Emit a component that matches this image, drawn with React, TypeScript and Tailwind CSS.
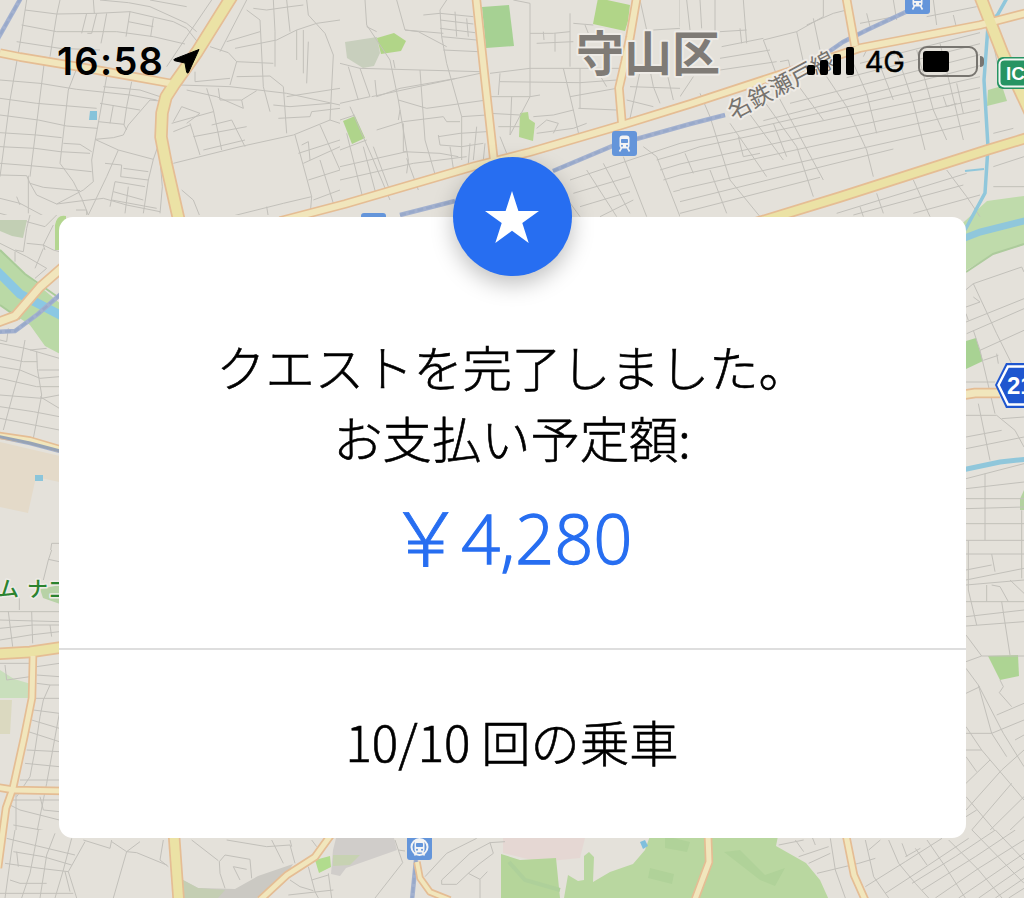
type Tile = { x: number; y: number; w: number; h: number; d: string };
type Road = { d: string; width: number };

// Minor streets, grouped by map tile. Each tile is drawn at 3x its final size.
const streets: Tile[] = [
  {
    x: 0,
    y: 0,
    w: 340,
    h: 215,
    d: `M80 0L60 130L30 300L0 530 M75 30L170 42L290 40L390 35L520 65L560 85L592 125 M65 75L170 95L350 95L460 110L555 132 M50 125L180 145L300 150
      M180 0L170 45L150 170 M290 40L275 100L262 100 M260 40L245 100 M320 40L310 95L303 130 M390 35L378 110 M300 0L385 8L450 20L560 70L590 95 M460 55L452 110 M385 65L460 80
      M280 0L283 40 M450 0L560 20 M240 180L205 270L180 490 M135 170L90 530 M320 230L275 480L280 545L250 570L170 612
      M0 240L120 250L230 268L390 285L470 300 M0 295L110 310L290 325 M0 345L115 360L200 378L292 385 M0 398L110 405L185 413 M0 440L105 445L180 455L270 460 M0 490L90 497L180 505L275 515
      M0 525L80 527L90 550L110 585L170 612L240 603L310 595L380 615L480 635 M180 490L220 545L245 595L265 645 M85 527V640 M90 550L130 562L240 572 M0 595L60 610L135 650 M50 590L60 615 M0 640L70 660
      M450 300L480 303 M450 300L385 375L370 405L340 413L285 418L355 450L460 478L480 420 M395 245L380 320L372 375L380 390 M300 310L420 330 M340 315L330 370 M295 365L372 373
      M190 430L240 433L275 455 M310 260L420 270L480 290 M355 450L320 530L265 645 M315 490L365 495L362 530L445 540L460 478 M370 505L445 515 M345 545L435 560 M345 545L330 620 M340 575L430 600 M335 600L470 625 M385 560L375 640 M445 540L430 640 M480 480L487 560L480 640
      M228 630H260V650 M635 0L560 110L500 200 M740 0L660 155 M630 140L685 158L710 185L690 255 M740 30L780 60L790 260L810 335 M820 0L825 95L825 200 M760 25L800 30L870 20L910 15 M860 0L870 95 M910 90L910 220 M920 0L925 45L975 100L1000 165L990 360
      M680 125L780 95 M705 145L830 120L890 90L950 70L1020 60 M890 90L890 180 M925 125L920 250 M710 185L820 190 M710 230L810 228L850 260L860 400 M585 215L585 245L690 235 M540 255L690 260L860 280L1020 315 M860 290L1020 265 M560 270L650 290L730 325 M655 265L660 300H725L770 272 M725 300L730 325
      M620 265L640 330L665 450 M520 365L545 320L600 340L560 370 M515 370L640 335 M570 370L600 465 M520 395L570 375 M635 375L695 360L735 440 M580 410L740 380 M610 450L735 420 M520 490L720 440L880 405L990 360L1020 370
      M820 315L870 320L990 310 M835 355L930 350L935 335L1020 325 M885 405L935 590L930 650 M905 435L925 425L930 480 M960 375L1020 510 M895 460L1020 420 M910 490L1020 440 M925 540L1020 510 M940 600L1020 570 M960 480L1000 610 M600 650L580 600L545 570 M690 650L850 610L935 590 M800 620L805 650`,
  },
  {
    x: 340,
    y: 0,
    w: 340,
    h: 217,
    d: `M75 0L80 75L150 180L175 300L205 480L200 520 M170 0L195 90L310 100 M195 90L235 95L320 140 M320 0L300 30L305 110L320 190L365 350L365 480 M80 80L110 95 M250 45L300 40L400 50 M300 60L400 72 M300 85L405 98 M305 110L410 120 M345 35L350 110 M380 55L385 110 M310 150L415 155
      M0 190L60 205L240 210L420 215 M160 180L165 205 M60 205L90 290L0 310 M25 200L55 300 M95 290L420 220 M105 240L110 290L180 265L350 235 M240 210L255 420L290 540 M175 300L260 325L440 300 M190 365L310 350L320 365L360 365 M110 390L190 365 M30 320L100 480L150 600 M0 360L45 345
      M190 370V455L300 460L355 470 M295 405L300 435L365 440L430 430 M295 410L360 400L440 395 M365 350L440 345 M180 330L175 360 M0 450L80 420 M0 500L110 475L200 455 M0 540L220 490L380 470 M100 440L145 560 M200 475L235 570 M70 440L110 590 M390 430L385 490 M410 380L400 480 M435 430L430 480 M20 400L70 600 M330 440L340 505
      M520 0L570 10L570 290L510 405 M570 100L640 100L690 95 M610 95L612 120 M645 100L645 155 M590 130L700 125 M690 40V200 M570 205H840 M450 220L570 205 M480 220L475 285 M480 245L720 248L830 240 M440 290L570 290L600 285 M515 290L510 405 M450 340L540 345 M720 205V325 M670 205L700 330L720 420
      M690 290L830 265 M715 325L830 330 M580 350L640 345L700 330 M590 385L620 360L655 370L640 400 M590 400L700 385L740 370 M480 410L500 460 M475 380H540 M700 70L760 75 M735 75L745 100 M770 210L800 260 M870 260L1020 265 M860 300L940 320 M930 210L940 260L960 310 M900 215L870 355 M980 215L1000 300
      M900 0L920 90 M1020 0V80 M940 90L1020 85 M690 540L900 470L1020 430 M640 540L720 650 M740 510L830 650 M790 490L870 640 M850 470L920 650 M910 440L950 470L1020 650 M700 580L870 530 M720 620L870 575 M780 650L880 600 M950 480L1020 460 M960 510L1020 492 M970 540L1020 525 M1000 575L1020 570`,
  },
  {
    x: 680,
    y: 0,
    w: 344,
    h: 217,
    d: `M20 0L30 90 M60 0L65 85 M105 0L105 95 M190 0L200 130 M120 95L200 90 M125 140L250 115 M180 85L185 130 M120 175L270 150 M120 210L290 185 M250 120L290 225 M0 290L40 230 M300 185L325 180L330 200 M250 120L350 95L430 50L430 0 M350 95L370 185 M400 55L420 150 M380 75L460 40L500 30
      M560 40L570 80 M640 0L650 60 M760 0L770 75 M740 50L890 20 M540 70L670 45 M820 45L830 85 M550 170L560 150
      M540 190L900 98 M500 233L900 131 M330 310L900 164 M250 362L900 197 M0 430L160 398L900 230 M0 460L60 440L900 263 M0 492L900 297 M0 525L900 330 M0 568L900 365 M0 605L640 447 M0 640L420 532
      M60 280L90 350L150 540L240 650 M150 370L260 530 M200 330L310 480 M250 300L350 440L400 590 M290 280L430 540 M350 250L430 360 M440 230L500 320L560 450L580 530 M520 190L560 280L590 400 M590 170L640 300 M650 160L700 310L735 450 M710 150L760 330L800 420 M780 130L850 420 M830 250L850 340 M175 410L190 470L240 460 M15 460L40 520 M90 510L140 640 M280 370L320 470 M790 290L800 320L830 310
      M590 580L610 640 M700 540L750 650 M800 510L860 590L900 650 M540 620L550 650 M520 645L850 555 M700 640L900 585 M470 640L860 520 M940 500L1032 470 M940 560H1032 M940 400L1000 385 M1000 240L1032 235 M940 130L960 230`,
  },
  {
    x: 0,
    y: 215,
    w: 62,
    h: 335,
    d: `M90 0L80 40L70 110L45 105 M80 20L135 35L170 0 M80 85L130 90L160 105L178 110 M160 30L130 90L135 105 M130 100L105 160 M45 110V140 M0 85L80 125L140 160L105 190 M75 375L60 460L10 645 M25 340L20 380L0 375 M0 385L75 400L178 430 M90 405L140 400 M0 425L70 440H112 M0 455L60 465L120 490L178 485 M110 410L112 460L125 540L100 670 M0 490L110 515H178 M0 540L125 550L178 540 M0 575L100 590L178 605 M0 610L178 645 M115 465H178 M120 545L178 580 M150 1020L155 985H178`,
  },
  {
    x: 0,
    y: 550,
    w: 62,
    h: 280,
    d: `M155 0L145 30L130 90 M145 28L178 35 M58 145V180 M0 185H178 M0 210L178 215 M0 235L100 225H178 M95 185L98 280 M25 185L38 290 M0 270L90 255L178 245 M150 225L155 260 M0 340H90 M15 345L20 390L90 380 M110 350L178 340 M110 375L178 380 M110 400L150 405L130 450L120 500L105 600L90 680L50 740 M150 405L178 405 M178 490L140 700L110 850 M105 445H178 M100 480L178 490 M95 510L178 535 M85 545L178 575 M80 600L178 605 M75 640L178 650 M60 690H178 M35 750H178 M120 740L130 780L178 785 M30 765L60 780L178 810 M48 730V840 M40 825L178 850`,
  },
  {
    x: 960,
    y: 217,
    w: 64,
    h: 333,
    d: `M18 218L40 200L185 150L192 165 M40 200L110 350L155 440 M18 270L60 255 M40 240L60 255 M18 315L192 245 M20 350L192 275 M18 290L25 310 M60 400L192 340 M70 430L115 415 M40 340L60 400L105 590 M110 410L115 440 M18 495H105 M18 595H110L165 640L192 690 M55 560L90 730 M18 660L125 640 M18 695L192 660 M125 605L192 600 M75 770V970 M18 785L192 740 M18 815L192 795 M18 845H192 M18 875L192 870 M18 920H192 M18 970H192 M25 970V1020 M185 880V1020`,
  },
  {
    x: 960,
    y: 550,
    w: 64,
    h: 280,
    d: `M18 12H192 M25 0V120L50 225 M185 0V85 M95 12L105 65 M18 60L95 45 M18 90L192 55 M18 105L192 90 M80 105V155 M95 105L120 110L145 155 M18 155H192 M150 90L192 130 M18 200L192 180 M18 228L192 215 M125 155L150 315 M18 255L65 318H192 M65 318L18 335 M18 355L55 405L95 550L140 620 M55 405L130 550L192 650 M18 430L60 410 M120 390L130 410L118 428L155 470 M110 495L192 460 M18 550H95L192 510 M165 570L192 555 M18 600H65L150 700L192 750 M18 530L65 600 M18 620L50 665 M18 700L90 630 M192 600L125 660L18 780 M18 740L120 860 M18 800L50 780 M155 700L18 860 M192 740L60 870 M192 800L140 850`,
  },
  {
    x: 0,
    y: 830,
    w: 512,
    h: 68,
    d: `M45 0L35 60L15 204 M115 0L90 130L65 204 M165 10L140 75L120 204 M215 25L190 120L165 204 M255 35L205 125L230 204 M20 25L100 45L225 75 M40 65L130 80L215 105 M15 100L120 115L205 125 M30 150L60 160H140 M0 190H220 M50 65L55 110 M195 125L210 185 M250 30L330 55L335 30 M335 35L380 65L420 35 M380 65L410 68L500 105 M380 65L340 204 M490 30L480 90L505 110 M575 30L655 92 M675 75L750 88L755 145 M675 75L658 95L660 130L675 175 M720 150L700 110L740 118 M680 30L800 50L870 45L885 100 M815 30L850 100 M870 30L875 50 M935 30L950 50 M925 110L945 185L955 204 M870 150L900 170L940 182 M935 150L985 135 M865 195L1000 180 M985 130L995 204 M1185 30L1195 60L1208 98L1125 204 M1195 60L1215 63 M1275 140L1340 70L1430 25 M1325 150V163H1370L1405 130L1440 148V204 M1325 150L1410 70L1470 38L1515 35 M1470 38L1480 70L1440 100L1405 130 M1440 148L1462 125`,
  },
  {
    x: 512,
    y: 830,
    w: 512,
    h: 68,
    d: `M800 45L875 30 M850 30L875 65 M860 80L950 50 M890 100L955 70 M915 130L1040 100L1090 85 M955 25L970 120L1000 204 M1060 30L1085 140L1130 204 M900 20L910 45 M1070 60L1105 30 M1130 30L1160 100L1210 160L1250 204 M1060 170L1180 95L1290 25 M1120 190L1250 105L1370 25 M1170 40L1185 80 M1210 55L1245 105 M1180 80L1225 55 M1245 30L1300 110L1360 204 M1310 30L1400 120L1470 204 M1380 0L1536 160 M1450 0L1536 90 M1200 160L1330 80L1450 0 M1230 180L1390 80L1510 0 M1270 204L1400 115L1536 30 M1340 204L1536 70 M1400 204L1536 110 M1450 204L1536 145 M1490 204L1536 175`,
  },
];

const roads: Road[] = [
  { d: "M0 53L20 57L80 67L130 76L174 84", width: 6 },
  { d: "M476 -4L485 80L495 170", width: 6 },
  { d: "M637 -4L630 37L625 62L619 88L622 124", width: 6 },
  { d: "M846 -4L855 46", width: 6 },
  { d: "M280 221L345 204L475 166L530 152L622 125L690 104L797 69L860 48L980 25L1030 12", width: 6 },
  { d: "M232 -4L197 52L175 83L166 97L162 113L161 137L166 163L180 225", width: 10 },
  { d: "M980 -4L1002 52L1030 112", width: 10 },
  { d: "M755 223L840 197L987 150L1030 137", width: 8 },
  { d: "M-4 323L15 316L40 287L64 266", width: 7 },
  { d: "M-4 435L30 440L64 450", width: 4 },
  { d: "M-4 654L30 652L64 647", width: 9 },
  { d: "M33 656L32 698L24 738L13 788L6 808L-2 868", width: 5 },
  { d: "M-4 787L14 790L64 791", width: 5 },
  { d: "M962 395L975 393L1000 393", width: 7 },
  { d: "M174 835L179 905", width: 9 },
  { d: "M333 832L315 857L287 875L260 900", width: 5 },
  { d: "M417 862L420 878L430 892L450 900", width: 4 },
  { d: "M708 835L709 862L694 902", width: 5 },
  { d: "M846 835L854 875L866 902", width: 5 },
];

const rails = [
  "M400 215L455 201",
  "M553 171L615 145L690 124L725 115",
  "M827 53L843 42L867 30L910 10",
  "M-4 42L22 -4",
  "M-4 332L15 331L38 314L62 293",
  "M-4 436L30 443L64 452",
  "M416 860L412 900",
];

function Station({ x, y }: { x: number; y: number }) {
  return (
    <g transform={`translate(${x} ${y})`}>
      <rect width="25" height="25" rx="3" fill="#6495da" />
      <rect x="7.5" y="4.5" width="10" height="13" rx="3" fill="#f4f4f4" />
      <rect x="9" y="8" width="7" height="4" rx=".8" fill="#6495da" />
      <circle cx="10" cy="14.8" r="1" fill="#6495da" />
      <circle cx="15" cy="14.8" r="1" fill="#6495da" />
      <path d="M9.5 17L7.5 20.5M15.5 17L17.5 20.5" stroke="#f4f4f4" strokeWidth="1.6" />
    </g>
  );
}

function MapBackground() {
  return (
    <svg
      className="absolute inset-0"
      width="1024"
      height="898"
      viewBox="0 0 1024 898"
      fill="none"
      aria-hidden="true"
    >
      <rect width="1024" height="898" fill="#e4e1da" />

      {/* parks, water and building areas */}
      <path d="M482 7L509 5L514 46L486 48Z" fill="#a6d193" />
      <path d="M598 -2L630 5L628 21L625 31L593 24Z" fill="#b1d588" />
      <path d="M345 42L377 37L380 53L374 66L363 68L347 58Z" fill="#c8cfbd" />
      <path d="M377 38L394 33L406 41L401 51L381 54Z" fill="#b1d588" />
      <path d="M343 121L355 116L365 138L352 144Z" fill="#afd48b" />
      <path d="M520 113L528 112L529 119L535 123L533 141L519 137Z" fill="#b4d690" />
      <path d="M988 90L1002 86L1007 101L987 106Z" fill="#b6d5a0" />
      <path d="M955 230L987 201L1024 196V245L993 254L960 274Z" fill="#bfdbab" />
      <path d="M966 272L993 254L1024 244" stroke="#adcb9c" strokeWidth="2" />
      <path d="M90 111H97V120H89Z" fill="#86c3da" />
      <path d="M0 220L27 220L23 238L12 236L0 231Z" fill="#c2cfb4" />
      <path d="M55 225Q57 214 66 216V250H55Z" fill="#b4d690" />
      <path d="M0 250L25 274L62 305V355L45 346L30 325L0 305Z" fill="#bad9a6" />
      <path d="M0 250L25 274L62 300M0 305L20 319" stroke="#a9cb98" strokeWidth="2" />
      <path d="M-4 270L20 294L62 316" stroke="#8bc8e3" strokeWidth="9" />
      <path d="M0 442L64 457V483L36 477L28 513L0 507Z" fill="#e4dac9" />
      <path d="M35 475H43V481H35Z" fill="#8bc5da" />
      <path d="M40 589L60 585V604L43 598Z" fill="#b7d2a6" />
      <path d="M0 670L14 679L31 684V698H0Z" fill="#c9dfbc" />
      <path d="M0 700H12L10 734H0Z" fill="#dbd9c0" />
      <path d="M966 341L976 338L983 361L966 369Z" fill="#a8d293" />
      <path d="M1020 499L1024 490V510H1020Z" fill="#b4d2a0" />
      <path d="M988 656L1018 655L1019 676L1000 680Z" fill="#add493" />
      <path d="M183 880L198 888L235 889L258 876L293 864L280 885L257 898H183Z" fill="#cbc9c3" />
      <path d="M183 880L198 888L225 890L218 898H183Z" fill="#c4ceb3" />
      <path d="M336 838H394L397 850L346 868L340 876L331 874L333 850Z" fill="#d0cdca" />
      <path d="M333 855L360 855L350 865L333 866Z" fill="#c7d2b2" />
      <path d="M315 860L330 856L331 867L319 873Z" fill="#b1dc8d" />
      <path d="M503 838H585L580 858L540 862L503 853Z" fill="#e5d7d3" />
      <path d="M501 898V854L520 860L556 858L560 898Z" fill="#b5d59a" />
      <path
        d="M564 898L568 875L578 881L584 880V856L589 852L594 857L593 882L610 872L633 864L645 850L650 836H778L776 846L806 863L820 880L829 900Z"
        fill="#b9d7a0"
      />
      <path
        d="M665 836L690 842L687 852L665 848ZM724 852L740 850L765 875L785 868L775 886L760 880ZM650 868L674 874L672 884L648 878Z"
        fill="#b0d299"
      />
      <path d="M640 842L645 840L648 846L643 849Z" fill="#7fbfdd" />
      <path d="M509 862L525 880L560 890" stroke="#aed09a" strokeWidth="4" />

      {streets.map((tile) => (
        <svg
          key={`${tile.x}-${tile.y}`}
          x={tile.x}
          y={tile.y}
          width={tile.w}
          height={tile.h}
          viewBox={`0 0 ${tile.w * 3} ${tile.h * 3}`}
        >
          <path d={tile.d} stroke="#c2c0ba" strokeWidth="3" />
        </svg>
      ))}

      <g stroke="#90c7db">
        <path d="M1007 -2L998 14L988 26L984 80L988 147L985 193L965 230" strokeWidth="3.5" />
        <path d="M965 171L984 169" strokeWidth="2" />
        <path d="M962 239L980 232L1028 220" strokeWidth="7" />
        <path d="M962 470L1000 462L1028 459" strokeWidth="5" />
      </g>

      {rails.map((d) => (
        <g key={d}>
          <path d={d} stroke="#a3b1cf" strokeWidth="4.5" />
          <path d={d} stroke="#98a9ca" strokeWidth="2.5" strokeDasharray="6 3" />
        </g>
      ))}

      <g strokeLinejoin="round">
        {roads.map((road) => (
          <path key={road.d} d={road.d} stroke="#e5bd94" strokeWidth={road.width + 3.4} />
        ))}
        {roads.map((road) => (
          <path
            key={road.d}
            d={road.d}
            stroke={road.width > 7 ? "#ebe2a5" : "#f1e6bc"}
            strokeWidth={road.width}
          />
        ))}
      </g>
      <path d={rails[5]} stroke="#97a3b5" strokeWidth="3" />

      <Station x={612} y={131} />
      <Station x={905} y={-11} />
      <Station x={361} y={213} />
      <Station x={407} y={835} />
      <circle cx="419.5" cy="847" r="8" stroke="#f4f4f4" strokeWidth="2" />

      <g
        className="font-['Noto_Sans_CJK_JP',sans-serif]"
        stroke="#eeebe6"
        strokeLinejoin="round"
        paintOrder="stroke"
      >
        <text x="576" y="71" fontSize="48" fontWeight="700" fill="#7f7b76" strokeWidth="4">
          守山区
        </text>
        <text
          transform="translate(733 120) rotate(-28)"
          fontSize="23"
          letterSpacing=".6"
          fill="#77736e"
          strokeWidth="4"
        >
          名鉄瀬戸線
        </text>
        <text x="-2" y="596" fontSize="21" fontWeight="500" fill="#2b832f" strokeWidth="3">
          ム
        </text>
        <text x="27" y="596" fontSize="21" fontWeight="500" fill="#2b832f" strokeWidth="3">
          ナゴ
        </text>
      </g>

      {/* interchange and route shields */}
      <rect x="997" y="57" width="50" height="32" rx="6" fill="#279463" />
      <rect x="999.5" y="59.5" width="46" height="27" rx="5" fill="#279463" stroke="#f2f6f2" strokeWidth="2" />
      <path d="M995 385L1006 363H1040V408H1006Z" fill="#1f56cf" />
      <path d="M998.5 385L1008 366.5H1040V404.5H1008Z" fill="#1f56cf" stroke="#fff" strokeWidth="2.5" />
      <g className="font-['Liberation_Sans',sans-serif]" fontWeight="700" fill="#fff">
        <text x="1006" y="80" fontSize="19">
          IC
        </text>
        <text x="1007" y="394" fontSize="24">
          21
        </text>
      </g>
    </svg>
  );
}

function StatusBar() {
  return (
    <header className="flex h-[122px] items-center justify-between pr-[40px] pl-[57px] text-black">
      <div className="flex items-center gap-[9px]">
        <span className="font-['Inter',sans-serif] text-[38px] leading-none font-semibold tracking-[1.3px]">
          16:58
        </span>
        <svg width="27" height="26" viewBox="0 0 27 26" aria-hidden="true">
          <path
            d="M26 1.5L15.5 24.5Q14.5 26 13.6 24L12 15L1.5 12.7Q0 12 1.5 11Z"
            fill="currentColor"
            stroke="currentColor"
            strokeLinejoin="round"
          />
        </svg>
      </div>
      <div className="flex items-center">
        <div className="flex h-7 items-end gap-[5px]">
          <span className="h-2.5 w-2 rounded-xs bg-black" />
          <span className="h-[15px] w-2 rounded-xs bg-black" />
          <span className="h-[21px] w-2 rounded-xs bg-black" />
          <span className="h-7 w-2 rounded-xs bg-black" />
        </div>
        <span className="ml-[11px] font-['Inter',sans-serif] text-[29px] leading-none [-webkit-text-stroke:0.4px_currentColor]">
          4G
        </span>
        <div className="ml-[13px] flex h-[31px] w-[60px] items-center rounded-[9px] border-2 border-[#77746f] pl-[3px]">
          <span className="h-[21px] w-[26px] rounded-[3px] bg-black" />
        </div>
        <span className="ml-[2px] h-[11px] w-1 rounded-r-full bg-[#77746f]" />
      </div>
    </header>
  );
}

function QuestCard() {
  return (
    <main className="relative mx-auto mt-[95px] flex h-[621px] w-[907px] flex-col items-center rounded-[14px] bg-white font-['Noto_Sans_CJK_JP',sans-serif] font-light text-black">
      <div className="-mt-[60px] flex size-[119px] shrink-0 items-center justify-center rounded-full bg-[#276ef1] shadow-[0_8px_22px_rgba(0,0,0,0.25)]">
        <svg width="54" height="52" viewBox="0 0 54 52" aria-hidden="true">
          <path d="M27 0L33.4 20H54L37.3 32L43.7 52L27 39.7L10.3 52L16.7 32L0 20H20.6Z" fill="#fff" />
        </svg>
      </div>
      <h1 className="mt-[54px] text-center text-[49.3px] leading-[71px] [-webkit-text-stroke:0.6px_currentColor]">
        クエストを完了しました。
        <br />
        お支払い予定額:
      </h1>
      <p className="mt-[14px] flex items-center pr-[3px] text-[#276ef1]">
        <span className="text-[75px] leading-[88px] [-webkit-text-stroke:0.9px_currentColor]">￥</span>
        <span className="-ml-[2px] pt-[8px] font-['Open_Sans',sans-serif] text-[68px] leading-[88px] tracking-[0.3px] [-webkit-text-stroke:1.4px_currentColor]">
          4,280
        </span>
      </p>
      <div className="mt-auto flex h-[190px] w-full items-center justify-center border-t-2 border-[#dedede]">
        <p className="-mt-2 text-[49.3px] leading-[71px] [-webkit-text-stroke:0.6px_currentColor]">
          10/10 回の乗車
        </p>
      </div>
    </main>
  );
}

export default function App() {
  return (
    <div className="relative h-[898px] w-[1024px] overflow-hidden">
      <MapBackground />
      <div className="relative">
        <StatusBar />
        <QuestCard />
      </div>
    </div>
  );
}
